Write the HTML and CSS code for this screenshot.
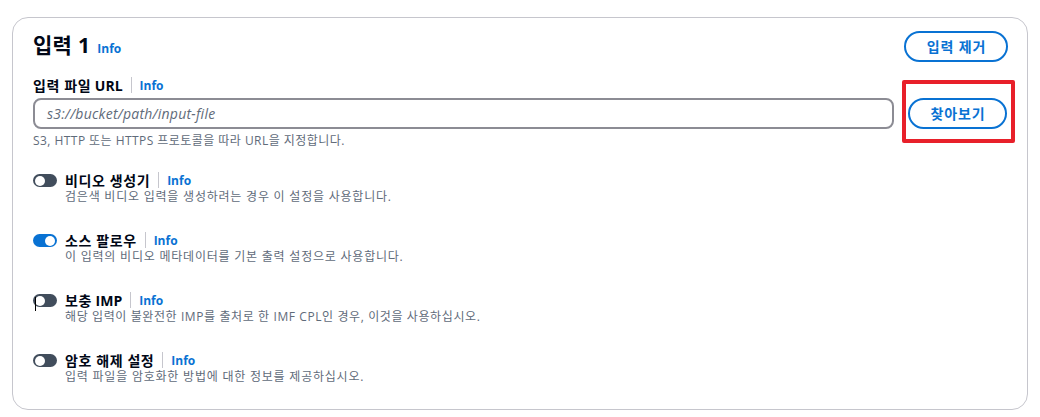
FILE: index.html
```html
<!DOCTYPE html>
<html lang="ko">
<head>
<meta charset="utf-8">
<link rel="stylesheet" href="styles.css">
</head>
<body>
<div class="panel">
  <div class="header">
    <h2 class="title"><span class="title-text">입력 1</span> <a class="info title-info">Info</a></h2>
    <button class="btn">입력 제거</button>
  </div>
  <div class="field-label"><span class="ko">입력 파일</span>&nbsp;<span>URL</span><span class="sep"></span><a class="info">Info</a></div>
  <div class="input-row">
    <div class="input"><span class="placeholder">s3://bucket/path/input-file</span></div>
    <div class="browse-wrap">
      <button class="btn browse">찾아보기</button>
      <span class="highlight"></span>
    </div>
  </div>
  <div class="help">S3, HTTP 또는 HTTPS 프로토콜을 따라 URL을 지정합니다.</div>
  <div class="toggles">
    <div class="trow">
      <span class="toggle"><span class="knob"></span></span>
      <div class="ttext">
        <div class="tlabel"><span class="ko">비디오 생성기</span><span class="sep"></span><a class="info">Info</a></div>
        <div class="tdesc">검은색 비디오 입력을 생성하려는 경우 이 설정을 사용합니다.</div>
      </div>
    </div>
    <div class="trow">
      <span class="toggle on"><span class="knob"></span></span>
      <div class="ttext">
        <div class="tlabel"><span class="ko">소스 팔로우</span><span class="sep"></span><a class="info">Info</a></div>
        <div class="tdesc">이 입력의 비디오 메타데이터를 기본 출력 설정으로 사용합니다.</div>
      </div>
    </div>
    <div class="trow">
      <span class="toggle"><span class="knob"></span><span class="cursor"></span></span>
      <div class="ttext">
        <div class="tlabel"><span class="ko">보충</span>&nbsp;<span>IMP</span><span class="sep"></span><a class="info">Info</a></div>
        <div class="tdesc mixed">해당 입력이 불완전한 IMP를 출처로 한 IMF CPL인 경우, 이것을 사용하십시오.</div>
      </div>
    </div>
    <div class="trow">
      <span class="toggle"><span class="knob"></span></span>
      <div class="ttext">
        <div class="tlabel"><span class="ko">암호 해제 설정</span><span class="sep"></span><a class="info">Info</a></div>
        <div class="tdesc">입력 파일을 암호화한 방법에 대한 정보를 제공하십시오.</div>
      </div>
    </div>
  </div>
</div>
</body>
</html>
```

FILE: styles.css
```css
* { box-sizing: border-box; }
body {
  margin: 0;
  background: #ffffff;
  font-family: "Open Sans", "Noto Sans CJK KR", sans-serif;
  color: #000716;
}
.panel {
  margin: 17px 0 0 12px;
  width: 1016px;
  height: 393px;
  border: 1px solid #c6c6cd;
  border-radius: 16px;
  padding: 13px 20px 0 20px;
}
.header {
  display: flex;
  justify-content: space-between;
  align-items: center;
  height: 31px;
}
.title {
  margin: 0;
  font-size: 21px;
  font-weight: 700;
  line-height: 24px;
  display: flex;
  align-items: baseline;
  gap: 5px;
}
.title-text { letter-spacing: 0.3px; }
.info {
  color: #0972d3;
  font-size: 12px;
  font-weight: 700;
  letter-spacing: 0;
}
.title-info { margin-left: 2px; }
.btn {
  font-family: "Open Sans", "Noto Sans CJK KR", sans-serif;
  background: #fff;
  border: 2px solid #0972d3;
  color: #0972d3;
  border-radius: 16px;
  height: 31px;
  padding: 0 0 0 1px;
  font-size: 14px;
  font-weight: 700;
  line-height: 27px;
  letter-spacing: 0.9px;
  cursor: pointer;
}
.header .btn { width: 104px; margin-right: -1px; }
.field-label {
  margin-top: 13px;
  height: 20px;
  display: flex;
  align-items: center;
  font-size: 14px;
  font-weight: 700;
}
.ko { letter-spacing: 0.6px; }
.sep {
  display: inline-block;
  width: 1px;
  height: 16px;
  background: #c6c6cd;
  margin: 0 8px 0 8px;
}
.input-row {
  margin-top: 3px;
  display: flex;
  align-items: center;
  gap: 14px;
}
.input {
  flex: 1;
  height: 31px;
  border: 2px solid #8c8c94;
  border-radius: 8px;
  padding: 0 12px;
  display: flex;
  align-items: center;
}
.placeholder {
  font-style: italic;
  font-size: 14px;
  letter-spacing: 0.25px;
  color: #5f6b7a;
}
.browse-wrap { position: relative; }
.browse { width: 99px; }
.highlight {
  position: absolute;
  left: -6px;
  top: -18px;
  width: 113px;
  height: 63px;
  border: 4px solid #e8202a;
  border-radius: 2px;
  pointer-events: none;
}
.help {
  margin-top: 4px;
  font-size: 12px;
  line-height: 16px;
  letter-spacing: 0.45px;
  color: #5f6b7a;
}
.toggles {
  margin-top: 22px;
  display: flex;
  flex-direction: column;
  gap: 26px;
}
.trow {
  display: flex;
  align-items: flex-start;
  gap: 8px;
}
.toggle {
  position: relative;
  margin-top: 3px;
  width: 24px;
  height: 13px;
  border-radius: 7px;
  background: #414d5c;
  flex: none;
}
.toggle .knob {
  position: absolute;
  left: 2px;
  top: 1.5px;
  width: 10px;
  height: 10px;
  border-radius: 50%;
  background: #fff;
}
.toggle.on { background: #0972d3; }
.toggle.on .knob { left: auto; right: 2px; }
.toggle .cursor {
  position: absolute;
  left: 2px;
  top: 3px;
  width: 1px;
  height: 14px;
  background: #000;
}
.tlabel {
  height: 18px;
  display: flex;
  align-items: center;
  font-size: 14px;
  font-weight: 700;
}
.tdesc {
  font-size: 12px;
  line-height: 16px;
  letter-spacing: 0.78px;
  color: #5f6b7a;
}
.tdesc.mixed { letter-spacing: 0.6px; }
```
